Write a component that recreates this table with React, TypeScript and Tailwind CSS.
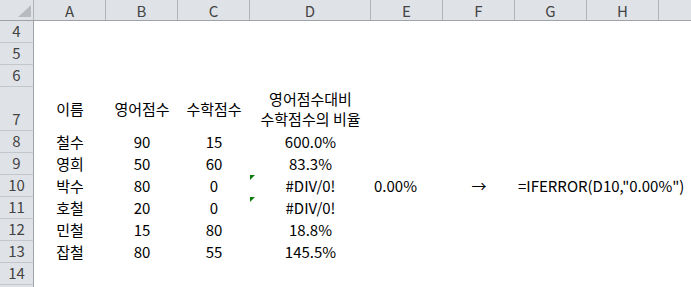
const cols = [
  { key: "A", w: "w-[72px]" },
  { key: "B", w: "w-[72px]" },
  { key: "C", w: "w-[72px]" },
  { key: "D", w: "w-[121px]" },
  { key: "E", w: "w-[72px]" },
  { key: "F", w: "w-[72px]" },
  { key: "G", w: "w-[72px]" },
  { key: "H", w: "w-[72px]" },
];

type Cell = { text?: string; align?: "left" | "center"; flag?: boolean };

const rows: { n: number; label?: boolean; tall?: boolean; cells: Cell[] }[] = [
  { n: 4, cells: [] },
  { n: 5, cells: [] },
  { n: 6, cells: [] },
  {
    n: 7,
    tall: true,
    cells: [
      { text: "이름" },
      { text: "영어점수" },
      { text: "수학점수" },
      { text: "영어점수대비\n수학점수의 비율" },
    ],
  },
  { n: 8, cells: [{ text: "철수" }, { text: "90" }, { text: "15" }, { text: "600.0%" }] },
  { n: 9, cells: [{ text: "영희" }, { text: "50" }, { text: "60" }, { text: "83.3%" }] },
  {
    n: 10,
    cells: [
      { text: "박수" },
      { text: "80" },
      { text: "0" },
      { text: "#DIV/0!", flag: true },
      { text: "0.00%", align: "left" },
      { text: "→" },
      { text: '=IFERROR(D10,"0.00%")', align: "left" },
    ],
  },
  { n: 11, cells: [{ text: "호철" }, { text: "20" }, { text: "0" }, { text: "#DIV/0!", flag: true }] },
  { n: 12, cells: [{ text: "민철" }, { text: "15" }, { text: "80" }, { text: "18.8%" }] },
  { n: 13, cells: [{ text: "잡철" }, { text: "80" }, { text: "55" }, { text: "145.5%" }] },
  { n: 14, cells: [] },
  // only a sliver of row 15 is on screen, its number is below the edge
  { n: 15, label: false, cells: [] },
];

export default function App() {
  return (
    <div className="w-[691px] h-[287px] overflow-hidden bg-white font-['Noto_Sans_CJK_KR','Malgun_Gothic',sans-serif] text-[15px] text-black">
      {/* column headers */}
      <div className="flex h-[21px] bg-[#dfe3e8] border-b border-[#9fa3a8] text-[#444]">
        <div className="relative w-[34px] shrink-0 border-r border-[#b1b5ba]">
          <div className="absolute right-[2px] bottom-[3px] w-[13px] h-[12px] bg-[#b8bcc1] [clip-path:polygon(100%_0,100%_100%,0_100%)]" />
        </div>
        {cols.map((c) => (
          <div
            key={c.key}
            className={`${c.w} shrink-0 border-r border-[#b1b5ba] flex items-center justify-center leading-none`}
          >
            {c.key}
          </div>
        ))}
        <div className="flex-1" />
      </div>

      {rows.map((r) => (
        <div key={r.n} className={`flex ${r.tall ? "h-[44px]" : "h-[22px]"}`}>
          <div className="w-[34px] shrink-0 bg-[#dfe3e8] border-r border-b border-r-[#9fa3a8] border-b-[#c3c7cc] text-[#444] flex items-end justify-center pb-[1px] leading-[20px]">
            {r.label === false ? null : r.n}
          </div>
          {cols.map((c, i) => {
            const cell = r.cells[i];
            return (
              <div
                key={c.key}
                className={`${c.w} shrink-0 relative flex items-center ${
                  cell?.align === "left" ? "justify-start pl-[3px]" : "justify-center"
                } whitespace-pre text-center leading-[20px]`}
              >
                {cell?.flag && (
                  <div className="absolute left-0 top-0 w-[5px] h-[5px] bg-[#0a7d0a] [clip-path:polygon(0_0,100%_0,0_100%)]" />
                )}
                {cell?.text}
              </div>
            );
          })}
        </div>
      ))}
    </div>
  );
}
